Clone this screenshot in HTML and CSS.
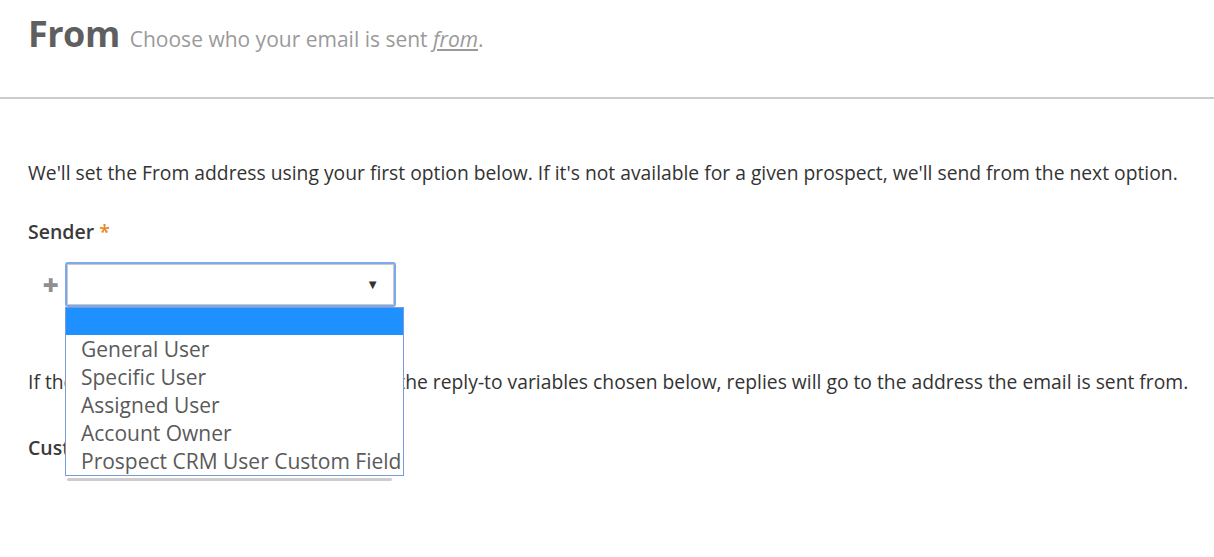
FILE: index.html
```html
<!DOCTYPE html>
<html lang="en">
<head>
<meta charset="utf-8">
<title>From</title>
<link rel="stylesheet" href="styles.css">
</head>
<body>
<header class="page-head">
  <h1 class="title">From</h1>
  <span class="subtitle">Choose who your email is sent <em class="u">from</em>.</span>
</header>
<main class="content">
  <p class="intro">We'll set the From address using your first option below. If it's not available for a given prospect, we'll send from the next option.</p>
  <div class="label">Sender <span class="req">*</span></div>
  <div class="field-row">
    <span class="plus">+</span>
    <div class="select-wrap">
      <div class="select"><span class="arrow">&#9660;</span></div>
      <ul class="dropdown">
        <li class="opt active">&nbsp;</li>
        <li class="opt">General User</li>
        <li class="opt">Specific User</li>
        <li class="opt">Assigned User</li>
        <li class="opt">Account Owner</li>
        <li class="opt">Prospect CRM User Custom Field</li>
      </ul>
    </div>
  </div>
  <p class="intro second">If there are no available values for any of the reply-to variables chosen below, replies will go to the address the email is sent from.</p>
  <div class="label custom">Custom Reply-To</div>
  <div class="shadow-row">
    <div class="select-edge"></div>
  </div>
</main>
</body>
</html>
```
FILE: styles.css
```css
html, body {
  margin: 0;
  padding: 0;
  background: #fff;
  font-family: "Open Sans", "Liberation Sans", sans-serif;
  color: #333;
}
.page-head {
  display: flex;
  align-items: baseline;
  gap: 10px;
  padding: 9px 28px 0;
  height: 99px;
  box-sizing: border-box;
  border-bottom: 2px solid #cbcbcb;
}
.title {
  margin: 0;
  font-size: 36px;
  font-weight: 700;
  color: #5f5f5f;
  letter-spacing: -0.5px;
}
.subtitle {
  font-size: 21px;
  color: #9a9a9a;
}
.subtitle .u {
  text-decoration: underline;
}
.content {
  padding: 60px 28px 0;
}
.intro {
  margin: 0;
  font-size: 19.3px;
  line-height: 28px;
  color: #333;
  white-space: nowrap;
}
.label {
  margin-top: 32px;
  font-size: 19.5px;
  font-weight: 600;
  color: #3a3a3a;
  line-height: 26px;
}
.label.custom {
  margin-top: 39px;
}
.req {
  color: #e8891c;
}
.field-row {
  display: flex;
  align-items: center;
  margin-top: 17px;
  gap: 6px;
  height: 44px;
}
.plus {
  width: 31px;
  text-align: right;
  font-size: 28px;
  font-weight: 800;
  color: #8f8f8f;
  line-height: 44px;
}
.select-wrap {
  position: relative;
}
.select {
  width: 331px;
  height: 45px;
  box-sizing: border-box;
  border: 2px solid #7ea8ee;
  border-radius: 3px;
  box-shadow: inset 0 0 0 1px #c9c9c9;
  background: #fff;
  display: flex;
  align-items: center;
  justify-content: flex-end;
  padding-right: 15px;
}
.arrow {
  font-size: 13px;
  color: #333;
}
.dropdown {
  position: absolute;
  left: 0;
  top: 45px;
  margin: 0;
  padding: 0;
  list-style: none;
  width: 339px;
  box-sizing: border-box;
  border: 1px solid #7a9bd6;
  background: #fff;
  z-index: 5;
}
.opt {
  font-size: 21px;
  line-height: 28px;
  color: #5a5a5a;
  padding-left: 15px;
  white-space: nowrap;
}
.opt.active {
  background: #1e90ff;
  height: 27px;
  line-height: 27px;
}
.second {
  margin-top: 62px;
}
.shadow-row {
  display: flex;
  padding-left: 39px;
  margin-top: 17px;
}
.select-edge {
  width: 325px;
  height: 3px;
  border-radius: 2px;
  background: #cdcdcd;
}
```
